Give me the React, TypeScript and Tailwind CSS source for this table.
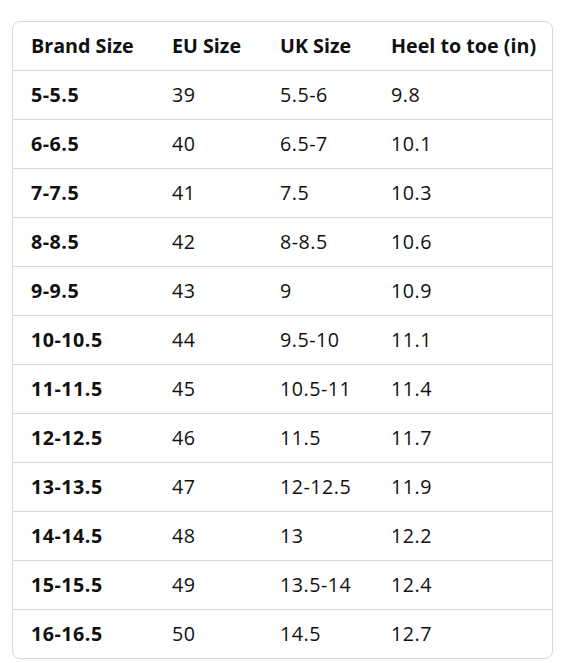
import React from "react";

const rows: [string, string, string, string][] = [
  ["5-5.5", "39", "5.5-6", "9.8"],
  ["6-6.5", "40", "6.5-7", "10.1"],
  ["7-7.5", "41", "7.5", "10.3"],
  ["8-8.5", "42", "8-8.5", "10.6"],
  ["9-9.5", "43", "9", "10.9"],
  ["10-10.5", "44", "9.5-10", "11.1"],
  ["11-11.5", "45", "10.5-11", "11.4"],
  ["12-12.5", "46", "11.5", "11.7"],
  ["13-13.5", "47", "12-12.5", "11.9"],
  ["14-14.5", "48", "13", "12.2"],
  ["15-15.5", "49", "13.5-14", "12.4"],
  ["16-16.5", "50", "14.5", "12.7"],
];

export default function App() {
  return (
    <div
      className="w-[565px] h-[663px] bg-white pt-[21px] px-3 text-[#0f1111] text-[19.7px]"
      style={{ fontFamily: '"Open Sans", "Noto Sans", sans-serif' }}
    >
      <div className="w-[541px] border border-[#d5d9d9] rounded-[8px] overflow-hidden">
        <div className="grid grid-cols-[141px_108px_111px_1fr] h-[49px] items-center border-b border-[#d5d9d9] font-bold">
          <div className="pl-[18px]">Brand Size</div>
          <div className="pl-[18px]">EU Size</div>
          <div className="pl-[18px]">UK Size</div>
          <div className="pl-[18px]">Heel to toe (in)</div>
        </div>
        {rows.map((r, i) => (
          <div
            key={i}
            className={`grid grid-cols-[141px_108px_111px_1fr] items-center tracking-[0.5px] ${
              i < rows.length - 1 ? "h-[49px] border-b border-[#d5d9d9]" : "h-[48px]"
            }`}
          >
            <div className="pl-[18px] font-bold">{r[0]}</div>
            <div className="pl-[18px]">{r[1]}</div>
            <div className="pl-[18px]">{r[2]}</div>
            <div className="pl-[18px]">{r[3]}</div>
          </div>
        ))}
      </div>
    </div>
  );
}
